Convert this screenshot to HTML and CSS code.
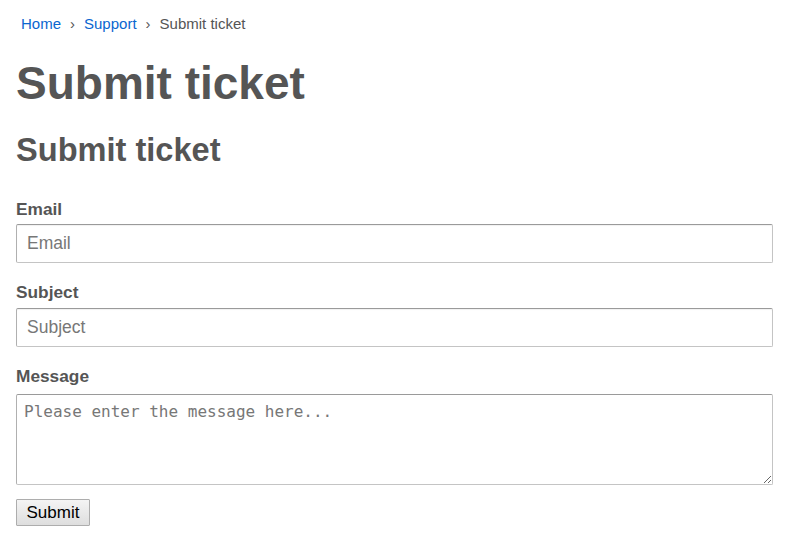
FILE: index.html
```html
<!DOCTYPE html>
<html lang="en">
<head>
<meta charset="utf-8">
<title>Submit ticket</title>
<link rel="stylesheet" href="styles.css">
</head>
<body>
<div class="page">
  <nav class="breadcrumb">
    <a href="#">Home</a><span class="sep">›</span><a href="#">Support</a><span class="sep">›</span><span class="current">Submit ticket</span>
  </nav>
  <h1 class="title">Submit ticket</h1>
  <h2 class="subtitle">Submit ticket</h2>
  <form class="form">
    <div class="field">
      <label class="label" for="email">Email</label>
      <input class="input" id="email" type="email" placeholder="Email">
    </div>
    <div class="field">
      <label class="label" for="subject">Subject</label>
      <input class="input" id="subject" type="text" placeholder="Subject">
    </div>
    <div class="field">
      <label class="label label-msg" for="message">Message</label>
      <textarea class="textarea" id="message" placeholder="Please enter the message here..."></textarea>
    </div>
    <button class="button" type="button">Submit</button>
  </form>
</div>
</body>
</html>
```
FILE: styles.css
```css
html, body {
  margin: 0;
  padding: 0;
  background: #ffffff;
}
body {
  font-family: "Liberation Sans", Arial, sans-serif;
  color: #555555;
}
.page {
  padding: 14px 23px 0 16px;
}
.breadcrumb {
  display: flex;
  align-items: center;
  font-size: 15px;
  line-height: 20px;
  height: 20px;
  padding-left: 5px;
}
.breadcrumb a {
  color: #0a66d0;
  text-decoration: none;
}
.sep {
  margin: 0 9px 0 9px;
  color: #555555;
}
.current {
  color: #555555;
}
.title {
  font-size: 46px;
  line-height: 1.15;
  font-weight: bold;
  margin: 23px 0 0 0;
}
.subtitle {
  font-size: 32.6px;
  line-height: 37px;
  font-weight: bold;
  margin: 21px 0 0 0;
}
.form {
  margin-top: 32px;
  display: flex;
  flex-direction: column;
}
.field {
  display: flex;
  flex-direction: column;
  margin-bottom: 20px;
}
.label {
  font-size: 17.3px;
  line-height: 19.5px;
  font-weight: bold;
  margin-bottom: 5px;
}
.label-msg {
  margin-bottom: 8px;
}
.input {
  box-sizing: border-box;
  width: 100%;
  height: 39px;
  font-family: "Liberation Sans", Arial, sans-serif;
  font-size: 17.5px;
  color: #333;
  padding: 0 10px;
  border: 1px solid #c4c4c4;
  border-top-color: #9a9a9a;
  border-left-color: #b0b0b0;
  border-radius: 2px;
  box-shadow: inset 0 1px 1px rgba(0,0,0,0.06);
  margin: 0;
}
.input::placeholder {
  color: #777;
}
.textarea {
  box-sizing: border-box;
  width: 100%;
  height: 91px;
  font-family: "DejaVu Sans Mono", "Liberation Mono", monospace;
  font-size: 16px;
  line-height: 1.2;
  padding: 7px 7px;
  border: 1px solid #c4c4c4;
  border-top-color: #9a9a9a;
  border-left-color: #b0b0b0;
  border-radius: 2px;
  margin: 0;
  resize: vertical;
}
.textarea::placeholder {
  color: #777;
}
.button {
  align-self: flex-start;
  margin-top: -6px;
  height: 27px;
  width: 74px;
  padding: 0;
  font-family: "Liberation Sans", Arial, sans-serif;
  font-size: 17px;
  color: #000;
  background: linear-gradient(#f4f4f4, #dedede);
  border: 1px solid #adadad;
  border-radius: 1px;
}
```
